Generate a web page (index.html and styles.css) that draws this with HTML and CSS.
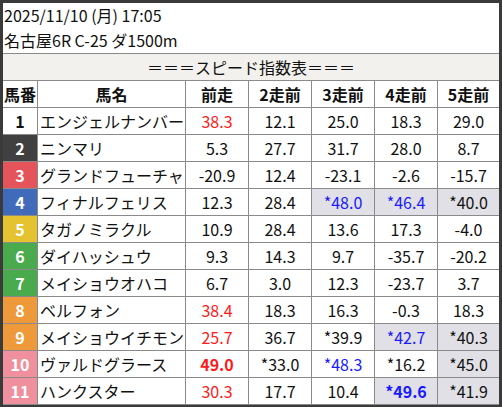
FILE: index.html
```html
<!DOCTYPE html>
<html lang="ja">
<head>
<meta charset="utf-8">
<link rel="stylesheet" href="styles.css">
</head>
<body>
<div class="frame">
  <div class="info">
    <div>2025/11/10 (月) 17:05</div>
    <div>名古屋6R C-25 ダ1500m</div>
  </div>
  <div class="title">＝＝＝スピード指数表＝＝＝</div>
  <div class="grid">
    <div class="h">馬番</div><div class="h">馬名</div><div class="h">前走</div><div class="h">2走前</div><div class="h">3走前</div><div class="h">4走前</div><div class="h">5走前</div>

    <div class="n w1">1</div><div class="nm">エンジェルナンバー</div><div class="red">38.3</div><div>12.1</div><div>25.0</div><div>18.3</div><div>29.0</div>
    <div class="n w2">2</div><div class="nm">ニンマリ</div><div>5.3</div><div>27.7</div><div>31.7</div><div>28.0</div><div>8.7</div>
    <div class="n w3">3</div><div class="nm">グランドフューチャ</div><div>-20.9</div><div>12.4</div><div>-23.1</div><div>-2.6</div><div>-15.7</div>
    <div class="n w4">4</div><div class="nm">フィナルフェリス</div><div>12.3</div><div>28.4</div><div class="g blue">*48.0</div><div class="g blue">*46.4</div><div class="g">*40.0</div>
    <div class="n w5">5</div><div class="nm">タガノミラクル</div><div>10.9</div><div>28.4</div><div>13.6</div><div>17.3</div><div>-4.0</div>
    <div class="n w6">6</div><div class="nm">ダイハッシュウ</div><div>9.3</div><div>14.3</div><div>9.7</div><div>-35.7</div><div>-20.2</div>
    <div class="n w6">7</div><div class="nm">メイショウオハコ</div><div>6.7</div><div>3.0</div><div>12.3</div><div>-23.7</div><div>3.7</div>
    <div class="n w8">8</div><div class="nm">ベルフォン</div><div class="red">38.4</div><div>18.3</div><div>16.3</div><div>-0.3</div><div>18.3</div>
    <div class="n w8">9</div><div class="nm">メイショウイチモン</div><div class="red">25.7</div><div>36.7</div><div>*39.9</div><div class="g blue">*42.7</div><div class="g">*40.3</div>
    <div class="n w10">10</div><div class="nm">ヴァルドグラース</div><div class="red b">49.0</div><div>*33.0</div><div class="blue">*48.3</div><div>*16.2</div><div class="g">*45.0</div>
    <div class="n w10">11</div><div class="nm">ハンクスター</div><div class="red">30.3</div><div>17.7</div><div>10.4</div><div class="g blue b">*49.6</div><div class="g">*41.9</div>
  </div>
</div>
</body>
</html>
```
FILE: styles.css
```css
html, body {
  margin: 0;
  padding: 0;
  background: #fff;
}
body {
  font-family: "Noto Sans CJK JP", "Noto Sans", sans-serif;
  font-size: 16px;
  color: #111;
}
.frame {
  box-sizing: border-box;
  width: 502px;
  height: 407px;
  border: 3px solid #3a3a3a;
  background: #fff;
  display: flex;
  flex-direction: column;
}
.info {
  height: 50px;
  border-bottom: 1px solid #8a8a8a;
  padding-left: 1px;
  line-height: 25px;
  display: flex;
  flex-direction: column;
  justify-content: center;
}
.title {
  height: 26px;
  line-height: 26px;
  text-align: center;
  background: #f2f1ee;
  border-bottom: 1px solid #8a8a8a;
}
.grid {
  display: grid;
  grid-template-columns: 34px 147px 62px 62px 62px 62px 61px;
  grid-auto-rows: 26px;
  gap: 1px;
  background: #8a8a8a;
  border-bottom: 1px solid #8a8a8a;
}
.grid > div {
  background: #fff;
  display: flex;
  align-items: center;
  justify-content: center;
  line-height: 1;
  white-space: nowrap;
  overflow: hidden;
}
.grid > .h { font-weight: bold; }
.grid > .nm { justify-content: flex-start; padding-left: 2px; }
.grid > .n { font-weight: bold; color: #fff; }
.grid > .w1 { color: #111; background: #fff; }
.grid > .w2 { background: #404040; }
.grid > .w3 { background: #e5545a; }
.grid > .w4 { background: #3f6bba; }
.grid > .w5 { background: #e5c22f; }
.grid > .w6 { background: #4aaa4e; }
.grid > .w8 { background: #ef9a3a; }
.grid > .w10 { background: #f0909e; }
.grid > .g { background: #e0e0e6; }
.red { color: #ff1a1a; }
.blue { color: #1a1aff; }
.b { font-weight: bold; }
```
